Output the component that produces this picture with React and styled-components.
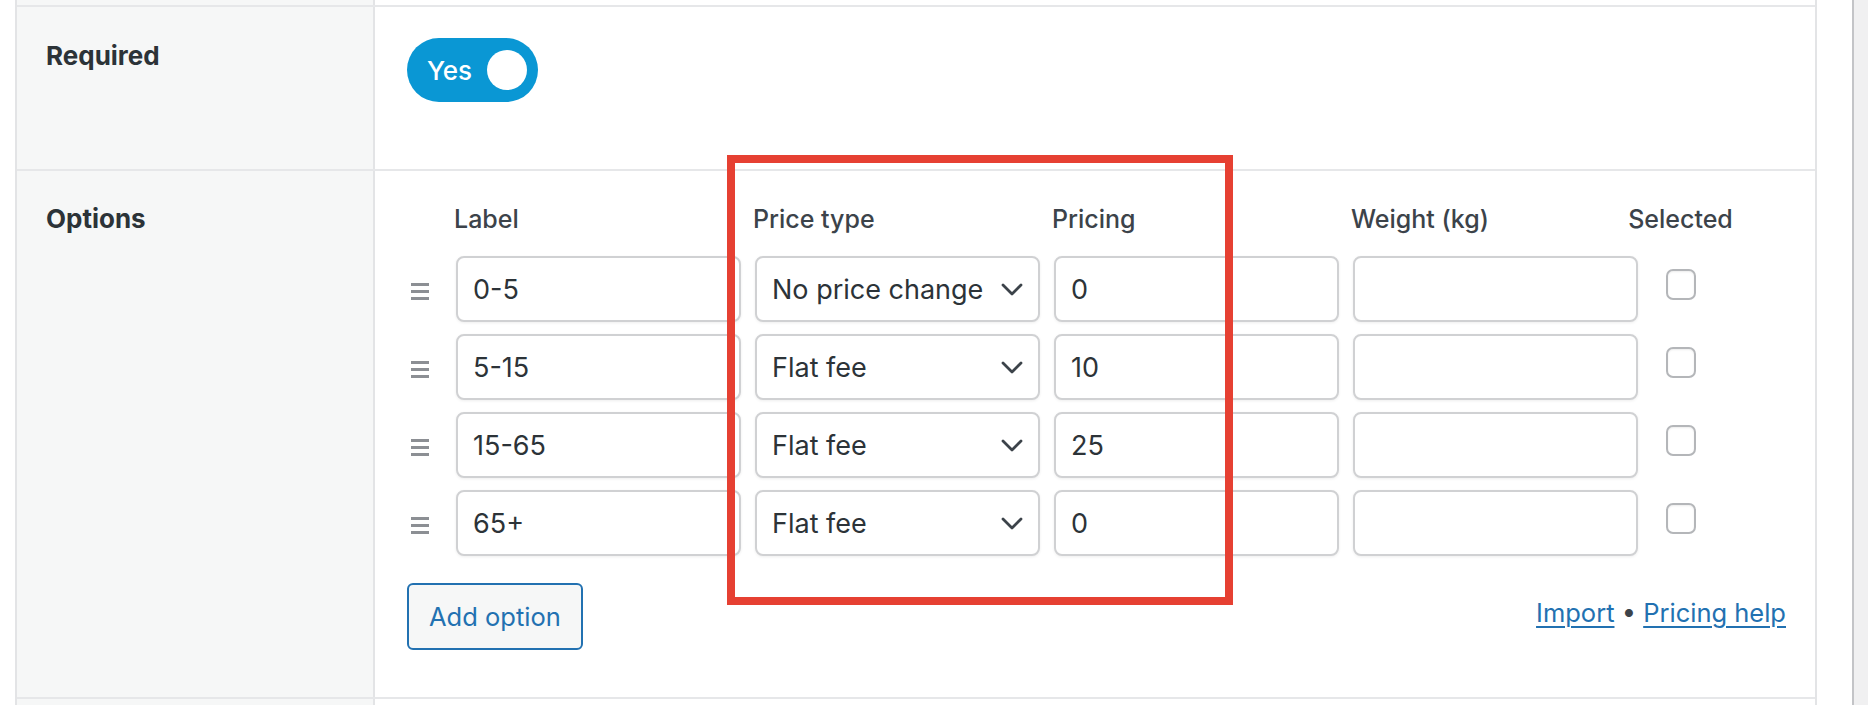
import React from "react";
import styled, { createGlobalStyle, css } from "styled-components";

const Global = createGlobalStyle`
  html, body { margin: 0; padding: 0; background: #f0f0f1; }
  body { font-family: Inter, "Noto Sans", sans-serif; -webkit-font-smoothing: antialiased; }
  *, *::before, *::after { box-sizing: border-box; }
`;

const Page = styled.div`
  position: relative;
  width: 1868px;
  height: 705px;
  overflow: hidden;
  display: flex;
`;

const Metabox = styled.div`
  width: 1854px;
  height: 100%;
  background: #fff;
  border-right: 2px solid #c3c4c7;
  padding: 0 35px 0 15px;
`;

const Table = styled.div`
  height: 100%;
  border-left: 2px solid #e3e4e6;
  border-right: 2px solid #e3e4e6;
  display: flex;
  flex-direction: column;
`;

const Row = styled.div`
  display: grid;
  grid-template-columns: 358px 1fr;
  height: ${(p) => (p.$h ? `${p.$h}px` : "auto")};
  flex: ${(p) => (p.$h ? "none" : "1")};
  border-bottom: ${(p) => (p.$last ? "none" : "2px solid #e6e7e9")};
`;

const LabelCell = styled.div`
  background: #f6f7f7;
  border-right: 2px solid #e3e4e6;
  padding: ${(p) => p.$pt || 0}px 0 0 29px;
`;

const LabelText = styled.div`
  font-size: 26px;
  line-height: 36px;
  font-weight: 700;
  color: #2c3338;
`;

const ValueCell = styled.div`
  padding: ${(p) => p.$pt || 0}px 29px 0 32px;
`;

const Toggle = styled.div`
  width: 131px;
  height: 64px;
  border-radius: 32px;
  background: #0a97d4;
  display: flex;
  align-items: center;
  justify-content: space-between;
  padding: 0 11px 0 20px;
  color: #fff;
  font-size: 26px;
  font-weight: 500;
`;

const Knob = styled.span`
  width: 40px;
  height: 40px;
  border-radius: 50%;
  background: #fff;
`;

const cols = css`
  display: grid;
  grid-template-columns: 35px 285px 285px 285px 285px 57px;
  column-gap: 14px;
`;

const HeadRow = styled.div`
  ${cols};
  height: 36px;
  margin-bottom: 19px;
`;

const HeadCell = styled.div`
  font-size: 25px;
  line-height: 36px;
  font-weight: 500;
  color: #3c434a;
  white-space: nowrap;
  display: flex;
  justify-content: ${(p) => (p.$center ? "center" : "flex-start")};
  margin-left: ${(p) => (p.$center ? "0" : "-2px")};
`;

const OptionGrid = styled.div`
  ${cols};
  grid-auto-rows: 66px;
  row-gap: 12px;
  align-items: center;
`;

const HandleCell = styled.div`
  display: flex;
  align-items: center;
  padding: 5px 0 0 4px;
  height: 100%;
`;

const fieldBase = css`
  height: 66px;
  width: 100%;
  border: 2px solid #d0d1d3;
  border-radius: 8px;
  background: #fff;
  box-shadow: 0 1px 3px rgba(0, 0, 0, 0.07);
  font-family: inherit;
  font-size: 27px;
  color: #2c3338;
`;

const TextInput = styled.input`
  ${fieldBase};
  padding: 0 15px;
  outline: none;
`;

const SelectBox = styled.div`
  ${fieldBase};
  padding: 0 15px;
  display: flex;
  align-items: center;
  justify-content: space-between;
  white-space: nowrap;
`;

const CheckCell = styled.div`
  display: flex;
  justify-content: center;
  align-self: start;
  padding-top: 13px;
`;

const Checkbox = styled.span`
  width: 30px;
  height: 31px;
  border: 2px solid #b4b6b9;
  border-radius: 7px;
  background: #fff;
  box-shadow: inset 0 1px 2px rgba(0, 0, 0, 0.08);
`;

const Footer = styled.div`
  display: flex;
  justify-content: space-between;
  align-items: center;
  margin-top: 27px;
`;

const Button = styled.button`
  height: 67px;
  padding: 0 20px;
  border: 2px solid #2271b1;
  border-radius: 6px;
  background: #f6f7f7;
  color: #2271b1;
  font-family: inherit;
  font-size: 25.5px;
  font-weight: 400;
`;

const Links = styled.div`
  font-size: 25.5px;
  color: #3c434a;
  margin-bottom: 9px;
  white-space: pre;
`;

const Link = styled.a`
  color: #2271b1;
  text-decoration: underline;
  text-decoration-thickness: 2px;
  text-underline-offset: 4px;
`;

const Highlight = styled.div`
  position: absolute;
  left: 727px;
  top: 155px;
  width: 506px;
  height: 450px;
  border: 8px solid #e64032;
  pointer-events: none;
`;

const Handle = () => (
  <svg width="18" height="17" viewBox="0 0 18 17">
    <rect x="0" y="0" width="18" height="3" fill="#8c8f94" />
    <rect x="0" y="7" width="18" height="3" fill="#8c8f94" />
    <rect x="0" y="14" width="18" height="3" fill="#8c8f94" />
  </svg>
);

const Chevron = () => (
  <svg width="22" height="13" viewBox="0 0 22 13">
    <polyline points="2,2 11,11 20,2" fill="none" stroke="#3c434a" strokeWidth="2.8" strokeLinecap="round" strokeLinejoin="round" />
  </svg>
);

const options = [
  { label: "0-5", type: "No price change", price: "0" },
  { label: "5-15", type: "Flat fee", price: "10" },
  { label: "15-65", type: "Flat fee", price: "25" },
  { label: "65+", type: "Flat fee", price: "0" },
];

export default function App() {
  return (
    <>
      <Global />
      <Page>
        <Metabox>
          <Table>
            <Row $h={7}>
              <LabelCell />
              <ValueCell />
            </Row>
            <Row $h={164}>
              <LabelCell $pt={31}>
                <LabelText>Required</LabelText>
              </LabelCell>
              <ValueCell $pt={31}>
                <Toggle>
                  Yes
                  <Knob />
                </Toggle>
              </ValueCell>
            </Row>
            <Row $h={528}>
              <LabelCell $pt={30}>
                <LabelText>Options</LabelText>
              </LabelCell>
              <ValueCell $pt={30}>
                <HeadRow>
                  <span />
                  <HeadCell>Label</HeadCell>
                  <HeadCell>Price type</HeadCell>
                  <HeadCell>Pricing</HeadCell>
                  <HeadCell>Weight (kg)</HeadCell>
                  <HeadCell $center>Selected</HeadCell>
                </HeadRow>
                <OptionGrid>
                  {options.map((o, i) => (
                    <React.Fragment key={i}>
                      <HandleCell>
                        <Handle />
                      </HandleCell>
                      <TextInput readOnly value={o.label} />
                      <SelectBox>
                        {o.type}
                        <Chevron />
                      </SelectBox>
                      <TextInput readOnly value={o.price} />
                      <TextInput readOnly value="" />
                      <CheckCell>
                        <Checkbox />
                      </CheckCell>
                    </React.Fragment>
                  ))}
                </OptionGrid>
                <Footer>
                  <Button>Add option</Button>
                  <Links>
                    <Link href="#">Import</Link>{" • "}<Link href="#">Pricing help</Link>
                  </Links>
                </Footer>
              </ValueCell>
            </Row>
            <Row $last>
              <LabelCell />
              <ValueCell />
            </Row>
          </Table>
        </Metabox>
        <Highlight />
      </Page>
    </>
  );
}
